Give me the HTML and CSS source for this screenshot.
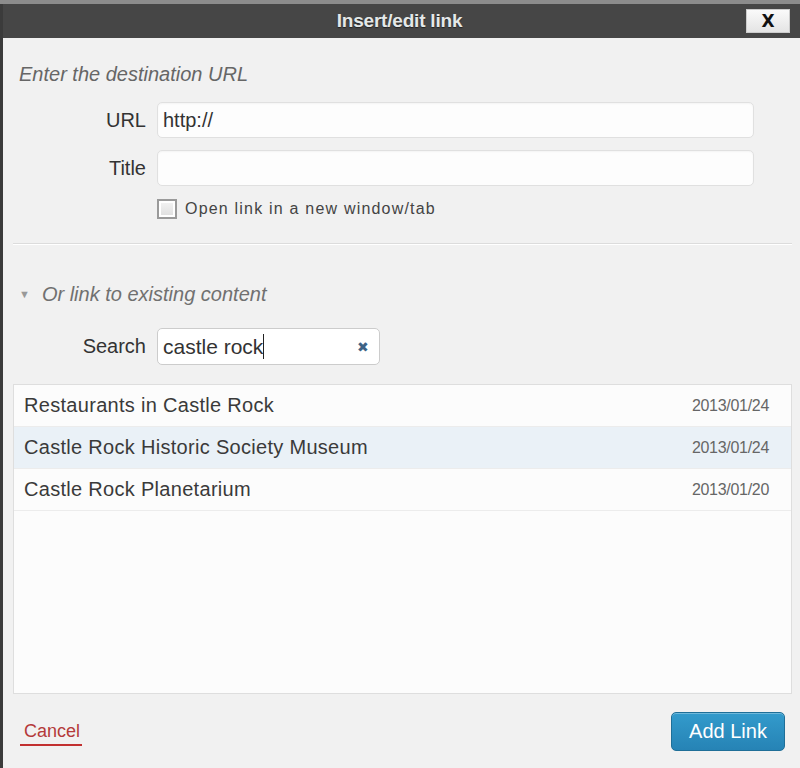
FILE: index.html
```html
<!DOCTYPE html>
<html lang="en">
<head>
  <meta charset="UTF-8">
  <title>Insert/edit link</title>
  <link rel="stylesheet" href="styles.css">
</head>
<body>
  <div class="dialog">
    <!-- Title bar -->
    <div class="titlebar">
      <span class="title">Insert/edit link</span>
      <button class="close" type="button">X</button>
    </div>

    <div class="content">
      <div class="url-section">
        <p class="howto">Enter the destination URL</p>
        <div class="field">
          <label class="label">URL</label>
          <input class="text-input" type="text" value="http://">
        </div>
        <div class="field">
          <label class="label">Title</label>
          <input class="text-input" type="text" value="">
        </div>
        <div class="field check-row">
          <span class="label"></span>
          <span class="checkbox"></span>
          <span class="check-text">Open link in a new window/tab</span>
        </div>
      </div>

      <div class="search-section">
        <p class="toggle"><span class="arrow">&#9660;</span>Or link to existing content</p>
        <div class="field">
          <label class="label">Search</label>
          <div class="search-box">
            <span class="search-text">castle rock</span><span class="caret"></span>
            <span class="clear">&#10006;</span>
          </div>
        </div>
      </div>

      <!-- Results -->
      <ul class="results">
        <li class="row"><span>Restaurants in Castle Rock</span><span class="date">2013/01/24</span></li>
        <li class="row selected"><span>Castle Rock Historic Society Museum</span><span class="date">2013/01/24</span></li>
        <li class="row"><span>Castle Rock Planetarium</span><span class="date">2013/01/20</span></li>
      </ul>

      <div class="footer">
        <a class="cancel" href="#">Cancel</a>
        <button class="submit" type="button">Add Link</button>
      </div>
    </div>
  </div>
</body>
</html>
```

FILE: styles.css
```css
body {
  margin: 0;
  padding: 0;
  background-color: #8c8c8c;
  font-family: 'Liberation Sans', Arial, sans-serif;
  color: #333;
  overflow: hidden;
}

.dialog {
  margin-top: 4px;
  height: 764px;
  border-left: 3px solid #3b3b3b;
  background-color: #f1f1f1;
  display: flex;
  flex-direction: column;
}

/* Title bar */
.titlebar {
  height: 34px;
  background-color: #464646;
  display: flex;
  align-items: center;
  justify-content: center;
  position: relative;
}

.title {
  color: #e4e8e8;
  font-weight: bold;
  font-size: 19px;
  letter-spacing: -0.2px;
  margin-left: -4px;
  text-shadow: 0 1px 1px #222;
}

.close {
  position: absolute;
  right: 10px;
  top: 5px;
  width: 44px;
  height: 24px;
  border: 1px solid #ccc;
  background: linear-gradient(#fafafa, #e4e4e4);
  font-family: 'DejaVu Sans', sans-serif;
  font-weight: bold;
  font-size: 17px;
  color: #111;
  padding: 0;
  line-height: 20px;
}

.content {
  flex: 1;
  display: flex;
  flex-direction: column;
  padding: 0 8px 0 10px;
}

.url-section {
  padding: 25px 0 23px 6px;
  border-bottom: 1px solid #dcdcdc;
  box-shadow: 0 1px 0 #fff;
}

.howto {
  margin: 0 0 16px;
  font-style: italic;
  font-size: 20px;
  line-height: 23px;
  color: #666;
}

.field {
  display: flex;
  align-items: center;
  margin-bottom: 12px;
}

.label {
  width: 127px;
  text-align: right;
  padding-right: 11px;
  font-size: 20px;
  color: #333;
  flex-shrink: 0;
}

.text-input {
  width: 597px;
  height: 36px;
  box-sizing: border-box;
  border: 1px solid #e0e0e0;
  border-radius: 5px;
  background-color: #fdfdfd;
  font-family: 'Liberation Sans', Arial, sans-serif;
  font-size: 20px;
  color: #333;
  padding: 0 5px;
  margin: 0;
  box-shadow: inset 0 1px 2px rgba(0, 0, 0, 0.04);
}

.check-row {
  margin-bottom: 0;
  margin-top: 1px;
  height: 22px;
}

.check-row .label {
  padding-right: 11px;
}

.checkbox {
  width: 16px;
  height: 16px;
  border: 2px solid #9a9a9a;
  background: linear-gradient(#f4f4f4, #dedede);
  box-shadow: inset 0 0 0 2px #fff;
  margin-right: 8px;
}

.check-text {
  font-size: 16px;
  color: #444;
  letter-spacing: 1.2px;
}

.search-section {
  padding: 39px 0 0 6px;
}

.toggle {
  margin: 0 0 22px;
  font-style: italic;
  font-size: 20px;
  line-height: 23px;
  color: #707070;
  display: flex;
  align-items: center;
}

.arrow {
  font-style: normal;
  font-size: 11px;
  color: #999;
  margin-right: 12px;
}

.search-box {
  width: 223px;
  height: 37px;
  box-sizing: border-box;
  border: 1px solid #ccc;
  border-radius: 5px;
  background-color: #fff;
  display: flex;
  align-items: center;
  padding: 0 5px;
  position: relative;
}

.search-text {
  font-size: 21px;
  color: #333;
}

.caret {
  width: 1px;
  height: 25px;
  background-color: #222;
}

.clear {
  position: absolute;
  right: 10px;
  top: 10px;
  font-size: 14px;
  color: #3e6386;
}

/* Results */
.results {
  list-style: none;
  margin: 7px 0 0;
  padding: 0;
  height: 308px;
  border: 1px solid #dedede;
  background-color: #fcfcfc;
}

.row {
  height: 41px;
  display: flex;
  align-items: center;
  justify-content: space-between;
  padding: 0 22px 0 10px;
  border-bottom: 1px solid #ececec;
  font-size: 20px;
  letter-spacing: 0.3px;
  color: #3a3a3a;
}

.row.selected {
  background-color: #eaf1f7;
}

.date {
  font-size: 16px;
  letter-spacing: -0.3px;
  color: #666;
}

.footer {
  display: flex;
  justify-content: space-between;
  align-items: center;
  padding: 18px 7px 0 10px;
}

.cancel {
  color: #b43a3a;
  font-size: 18px;
  text-decoration: none;
  border-bottom: 2px solid #c23030;
  padding: 0 2px 2px 4px;
  margin: 3px 0 0 -3px;
}

.submit {
  width: 114px;
  height: 39px;
  border: 1px solid #1f6f98;
  border-radius: 5px;
  background: linear-gradient(#339bcc, #2683b5);
  color: #fff;
  font-family: 'Liberation Sans', Arial, sans-serif;
  font-size: 20px;
  box-shadow: inset 0 1px 0 rgba(255, 255, 255, 0.3);
}
```
